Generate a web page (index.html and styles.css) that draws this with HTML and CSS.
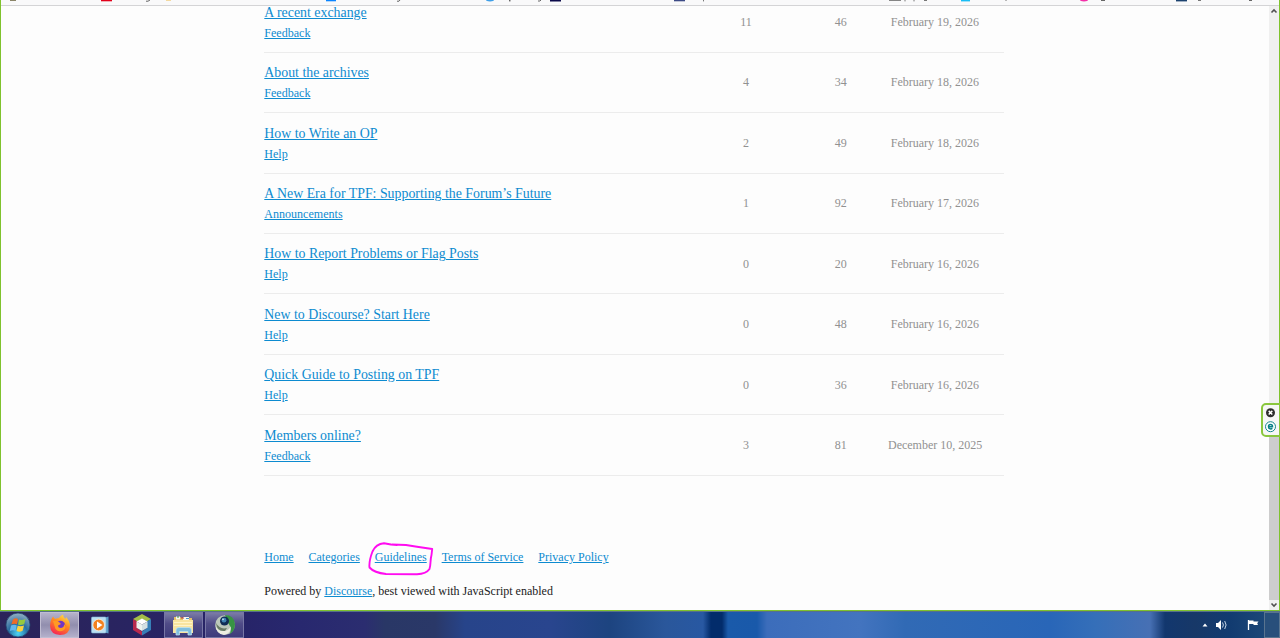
FILE: index.html
```html
<!DOCTYPE html>
<html lang="en">
<head>
    <meta charset="UTF-8">
    <title>The Philosophy Forum</title>
    <link rel="stylesheet" href="styles.css">
</head>
<body>
    <div class="browser">
        <!-- lower edge of the bookmarks toolbar -->
        <div class="bookmarks">
            <svg width="1278" height="5" viewBox="1 0 1278 5">
                <rect x="10" width="6" height="1" fill="#8a8468"/>
                <rect x="101" width="11" height="1.3" fill="#e2001a"/>
                <path d="M146 1.2h2l2-1.2M397 1.2h2l1-1.2M538 1h2l1-1M1101 .5h4M1249 .5h3" fill="none" stroke="#666"/>
                <rect x="166" width="5" height="1" fill="#f3d9a0"/>
                <rect x="326" width="10" height="1.3" fill="#0a84ff"/>
                <ellipse cx="490" cy="0" rx="4" ry="1.4" fill="#3f9fe8"/>
                <rect x="509" width="1.5" height="1.4" fill="#666"/>
                <rect x="550" width="11" height="1.5" fill="#0b0a4a"/>
                <rect x="674" width="11" height="1.3" fill="#3c4a86"/>
                <path d="M703.500 0v1.400M905 0v1.400M914 0v1.400M889 .4h12M924 .5h3M1006 0v1M1198 .5h3" stroke="#777"/>
                <rect x="961" width="9" height="1.4" fill="#19bdf5"/>
                <ellipse cx="1084" cy="0" rx="4" ry="1.4" fill="#f32fa8"/>
                <rect x="1176" width="11" height="1.4" fill="#1c426f"/>
            </svg>
        </div>

        <div class="viewport">
            <div class="page">
                <div class="topic-list">
                    <div class="topic">
                        <div class="main-link"><a class="title" href="#">A recent exchange</a><a class="category" href="#">Feedback</a></div>
                        <span class="replies">11</span><span class="views">46</span><span class="date">February 19, 2026</span>
                    </div>
                    <div class="topic">
                        <div class="main-link"><a class="title" href="#">About the archives</a><a class="category" href="#">Feedback</a></div>
                        <span class="replies">4</span><span class="views">34</span><span class="date">February 18, 2026</span>
                    </div>
                    <div class="topic">
                        <div class="main-link"><a class="title" href="#">How to Write an OP</a><a class="category" href="#">Help</a></div>
                        <span class="replies">2</span><span class="views">49</span><span class="date">February 18, 2026</span>
                    </div>
                    <div class="topic">
                        <div class="main-link"><a class="title" href="#">A New Era for TPF: Supporting the Forum’s Future</a><a class="category" href="#">Announcements</a></div>
                        <span class="replies">1</span><span class="views">92</span><span class="date">February 17, 2026</span>
                    </div>
                    <div class="topic">
                        <div class="main-link"><a class="title" href="#">How to Report Problems or Flag Posts</a><a class="category" href="#">Help</a></div>
                        <span class="replies">0</span><span class="views">20</span><span class="date">February 16, 2026</span>
                    </div>
                    <div class="topic">
                        <div class="main-link"><a class="title" href="#">New to Discourse? Start Here</a><a class="category" href="#">Help</a></div>
                        <span class="replies">0</span><span class="views">48</span><span class="date">February 16, 2026</span>
                    </div>
                    <div class="topic">
                        <div class="main-link"><a class="title" href="#">Quick Guide to Posting on TPF</a><a class="category" href="#">Help</a></div>
                        <span class="replies">0</span><span class="views">36</span><span class="date">February 16, 2026</span>
                    </div>
                    <div class="topic">
                        <div class="main-link"><a class="title" href="#">Members online?</a><a class="category" href="#">Feedback</a></div>
                        <span class="replies">3</span><span class="views">81</span><span class="date">December 10, 2025</span>
                    </div>
                </div>

                <div class="footer">
                    <div class="footer-nav">
                        <a href="#">Home</a>
                        <a href="#">Categories</a>
                        <a class="circled" href="#">Guidelines<svg class="scribble" width="66" height="36" viewBox="368 541 66 36"><path d="M397 545L391 544.500L384 543.200C379 543.500 374.500 547 372.500 551.500C370 558 369 563 369.500 567.500C373 571.500 378 573.200 386 574L417 574.200C423 574 427.500 572 429.500 569C431 565 430 560 431.500 555L432.200 549L417 546.800L406 545L392 544.500" fill="none" stroke="#ff0cf0" stroke-width="1.900" stroke-linecap="round" stroke-linejoin="round"/></svg></a>
                        <a href="#">Terms of Service</a>
                        <a href="#">Privacy Policy</a>
                    </div>
                    <p class="powered">Powered by <a href="#">Discourse</a>, best viewed with JavaScript enabled</p>
                </div>
            </div>

            <div class="scrollbar">
                <svg width="10" height="10" viewBox="0 0 10 10"><path d="M2.500 6.500L5 4L7.500 6.500" fill="none" stroke="#505050" stroke-width="1.600"/></svg>
                <div class="thumb"></div>
                <svg width="10" height="10" viewBox="0 0 10 10"><path d="M2.500 3.500L5 6L7.500 3.500" fill="none" stroke="#505050" stroke-width="1.600"/></svg>
            </div>
        </div>

        <!-- floating panel on the right edge -->
        <div class="side-tab">
            <svg width="17" height="32" viewBox="1262 404 17 32">
                <circle cx="1270.500" cy="412.700" r="4.500" fill="#2d2d2d"/>
                <path d="M1268.700 410.900l3.600 3.600m0-3.600l-3.600 3.600" stroke="#fff" stroke-width="1.500"/>
                <circle cx="1270.500" cy="426.700" r="5" fill="#fff" stroke="#16868d" stroke-width="1"/>
                <path d="M1268.500 426.700h4c0-2.800-4-2.800-4 0c0 2.700 3 2.500 3.800 1.600" fill="none" stroke="#078087" stroke-width="1.500"/>
            </svg>
        </div>
    </div>

    <div class="taskbar">
        <div class="start">
            <svg width="26" height="26" viewBox="0 0 26 26">
                <defs>
                    <radialGradient id="orb" cx=".5" cy=".85" r=".8"><stop offset="0" stop-color="#4cd6f5"/><stop offset=".5" stop-color="#286da0"/><stop offset="1" stop-color="#8ba8c0"/></radialGradient>
                </defs>
                <circle cx="13" cy="13" r="12" fill="url(#orb)" stroke="#23466e" stroke-width=".8"/>
                <path d="M8 7.500Q10.500 5.500 13 7L12 12.300Q9.500 11 6.300 12.500Z" fill="#ee6b27"/>
                <path d="M14 7.500Q16.500 8.700 20.500 7L19.200 12.300Q15.500 13.800 13 12.500Z" fill="#96c93f"/>
                <path d="M6 13.500Q9.500 12 11.700 13.400L10.500 18.800Q8 17.500 4.800 19Z" fill="#65b8ed"/>
                <path d="M12.700 13.700Q15.500 14.800 19 13.400L17.600 18.800Q14.500 20.400 11.500 19Z" fill="#fdd23f"/>
            </svg>
        </div>
        <div class="task active">
            <svg width="24" height="24" viewBox="0 0 24 24">
                <defs>
                    <linearGradient id="fox" x1=".8" y1="0" x2=".3" y2="1"><stop offset="0" stop-color="#ffe44b"/><stop offset=".45" stop-color="#ff8a20"/><stop offset="1" stop-color="#f62354"/></linearGradient>
                </defs>
                <path d="M3.500 6L5 3.500L7 6Q9 5 11 5Q12 2.500 15 1.500Q15 4 17.500 6L18 4Q22 8 22 13Q21.500 22 12 22Q2.500 21.500 2 13Q2 9 3.500 6Z" fill="url(#fox)"/>
                <circle cx="12.500" cy="12.500" r="4.700" fill="#7136c5"/>
                <path d="M5 8Q8 7 11 9L13 11L10 12.500Q10 15 13 15Q16.500 14.500 16 11Q19 14 16 17Q11 20 7.500 16Z" fill="#ff9a24"/>
            </svg>
        </div>
        <div class="task">
            <svg class="player" width="20" height="20" viewBox="0 0 20 20">
                <path d="M15 2.500L18.500 1.500V18.500L15 17.500Z" fill="#5c9fc9"/>
                <rect x="1.500" y="2" width="14.500" height="16" rx="1" fill="#bbdff1" stroke="#83bad8" stroke-width=".6"/>
                <circle cx="8.700" cy="10" r="5.800" fill="#f28220" stroke="#fff3e6" stroke-width=".7"/>
                <path d="M7 6.500V13.500L12.500 10Z" fill="#fff"/>
            </svg>
        </div>
        <div class="task">
            <svg width="22" height="24" viewBox="0 0 22 24">
                <path d="M11 1L20 6L16 8.500L11 6L6 8.500L2 6Z" fill="#a4bd48"/>
                <path d="M2 6L6 8.500V15L11 18.500V22.500L2 17Z" fill="#b72a4e"/>
                <path d="M20 6L16 8.500V15L11 18.500V22.500L20 17Z" fill="#377fb8"/>
                <path d="M11 5.500L16.500 8.500L11 11.500L5.500 8.500Z" fill="#fff"/>
                <path d="M5.500 8.500L11 11.500V18L5.500 14.800Z" fill="#edf2ee"/>
                <path d="M16.500 8.500L11 11.500V18L16.500 14.800Z" fill="#d3dfe2"/>
            </svg>
        </div>
        <div class="task open">
            <svg width="24" height="24" viewBox="0 0 24 24">
                <path d="M3 4H9L11 5H21V19H3Z" fill="#e4c367"/>
                <path d="M5 3.500h4v3H5zM12 4h6v3h-6z" fill="#f8f7ec"/>
                <path d="M6 3.500h2v1H6z" fill="#39944d"/><path d="M10 4.500h3v1h-3z" fill="#c74b36"/><path d="M15 5h3v1h-3z" fill="#4895ca"/>
                <path d="M2 7H22V20H2Z" fill="#f8e49f"/>
                <path d="M3 9.500H21M3 12.500H21" stroke="#fff4c8"/>
                <path d="M5 22V17Q5 14.500 8 14.500H18Q20.500 14.500 20.500 17V22H17V18.500H8.500V22Z" fill="#80bfdf" stroke="#c4e6f3" stroke-width=".7"/>
            </svg>
        </div>
        <div class="task open">
            <svg width="24" height="24" viewBox="0 0 24 24">
                <circle cx="12" cy="12" r="9.800" fill="#bcc8bb"/>
                <path d="M12 2Q21 2 22 11Q22 18 17 21Q19 14 15 10Z" fill="#379344"/>
                <path d="M2.500 12Q4 18 10 18Q16 18 18 13Q18 21 11 22Q3 21 2.500 12Z" fill="#edeee2"/>
                <path d="M3 10Q7 17 14 15L12 18Q4 19 3 10Z" fill="#697b66"/>
                <circle cx="11.500" cy="8" r="4.500" fill="#102d55"/>
                <circle cx="11" cy="7.200" r="2.400" fill="#3f83b3"/>
                <circle cx="10" cy="6.300" r=".9" fill="#cce5ef"/>
            </svg>
        </div>
        <div class="tray">
            <svg width="58" height="16" viewBox="0 0 58 16">
                <path d="M1.500 9.500L4 6.500L6.500 9.500Z" fill="#fff"/>
                <path d="M15 6h2l3-3v10l-3-3h-2Z" fill="#fff"/>
                <path d="M21.500 5.500q1.800 2.500 0 5M23.700 4q2.800 4 0 8" fill="none" stroke="#d9e6f3" stroke-width=".9"/>
                <path d="M47.500 3V13" stroke="#fff" stroke-width="1.300"/>
                <path d="M48 3.500h4.500v1h5l-1.300 1.700l.8 1.800H53l-1-1h-4Z" fill="#fff"/>
            </svg>
            <div class="show-desktop"></div>
        </div>
    </div>
</body>
</html>
```
FILE: styles.css
```css
* {
    box-sizing: border-box;
}

body {
    margin: 0;
    height: 638px;
    overflow: hidden;
    display: flex;
    flex-direction: column;
    font-family: "Liberation Serif", "Times New Roman", serif;
    font-size: 12px;
    color: #222;
    background-color: #fdfdfd;
}

a {
    color: #0d8bd0;
    text-decoration: underline;
}

svg {
    display: block;
}

.browser {
    position: relative;
    height: 611px;
    display: flex;
    flex-direction: column;
    border: 1px solid #7fc22d;
    border-top: 0;
}

.bookmarks {
    height: 6px;
    flex: none;
    background-color: #f9f9fa;
    border-bottom: 1px solid #d4d4d6;
}

.viewport {
    flex: 1;
    min-height: 0;
    display: flex;
}

.page {
    flex: 1;
    padding-left: 263.300px;
}

.topic-list {
    width: 740px;
    margin-top: -13.700px;
}

.topic {
    height: 60.430px;
    display: grid;
    grid-template-columns: 434.400px 94.700px 94.600px 94px;
    align-items: center;
    border-bottom: 1px solid #ececec;
    color: #919191;
}

.main-link {
    display: flex;
    flex-direction: column;
    align-items: flex-start;
    gap: 6px;
    padding-top: 2.500px;
}

.title {
    font-size: 13.860px;
    line-height: 14px;
}

.category {
    font-size: 12.050px;
    line-height: 15px;
}

.replies,
.views,
.date {
    padding-top: 1px;
    text-align: center;
    white-space: nowrap;
}

.footer {
    padding-top: 73.700px;
}

.footer-nav {
    display: flex;
    gap: 14.900px;
    line-height: 16px;
}

.circled {
    position: relative;
}

/* pink pen mark around the link */
.scribble {
    position: absolute;
    left: -7px;
    top: -8px;
}

.powered {
    margin: 18px 0 0;
    line-height: 16px;
}

.scrollbar {
    width: 10px;
    display: flex;
    flex-direction: column;
    background-color: #f0f0f0;
}

.thumb {
    height: 170px;
    margin-top: auto;
    background-color: #cdcdcd;
}

.side-tab {
    position: absolute;
    right: -1px;
    top: 403px;
    width: 19px;
    height: 34px;
    background-color: #f7f7f7;
    border: 2px solid #8ac73e;
    border-right-width: 1px;
    border-radius: 5px 0 0 5px;
}

.side-tab svg {
    margin: -1px;
}

.taskbar {
    height: 27px;
    display: flex;
    align-items: center;
    border-top: 1px solid #57718a;
    background: linear-gradient(90deg, #2b2459 0, #272468 240px, #28286f 300px, #2b2d70 365px, #293766 385px, #2a3868 435px, #27448a 465px, #29458e 550px, #1d4480 610px, #2a579b 665px, #2858a2 703px, #022c6b 711px, #022c6b 722px, #1a5aaa 728px, #1959aa 757px, #3c6dbb 767px, #4374bf 860px, #316ab5 905px, #2966b8 1050px, #356fb9 1095px, #4770b4 1150px, #12376e 1165px, #173868 1195px, #123b70 1230px, #204c7b 1280px);
}

.start {
    width: 40px;
    padding-left: 5px;
}

.task {
    width: 39px;
    height: 26px;
    margin-right: 2.300px;
    display: flex;
    align-items: center;
    justify-content: center;
}

.player {
    margin-right: 2px;
}

.task.open {
    background: linear-gradient(#7a7ba6, #4f4b87 45%, #3e3b7b);
    border: 1px solid #7776a5;
}

.task.active {
    background: linear-gradient(#b5b2ca, #918eae 50%, #b4b0cb);
    border: 1px solid #c0bdd2;
}

.tray {
    margin-left: auto;
    display: flex;
    align-items: center;
    gap: 5px;
}

.show-desktop {
    width: 16px;
    height: 26px;
    background-color: #284f7b;
    border: 1px solid #59748f;
}
```
